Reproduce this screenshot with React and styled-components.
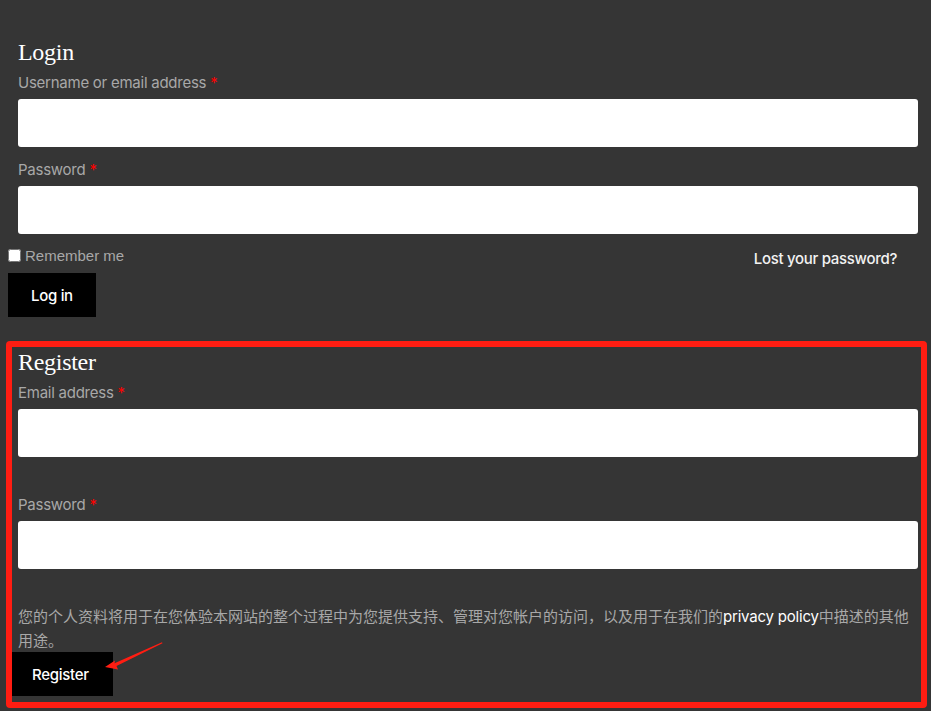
import React from "react"
import styled, { createGlobalStyle } from "styled-components"

const GlobalStyle = createGlobalStyle`
  html, body {
    margin: 0;
    background: #353535;
  }
  body {
    font-family: Inter, "Noto Sans CJK SC", sans-serif;
  }
`

const Page = styled.div`
  min-height: 100vh;
  box-sizing: border-box;
  padding: 38px 13px 0 8px;
  background: #353535;
`

const Title = styled.h2`
  margin: 0 0 0 10px;
  font-family: "Liberation Serif", "DejaVu Serif", serif;
  font-weight: 400;
  font-size: 24px;
  line-height: 29px;
  color: #fff;
  letter-spacing: -0.3px;
`

const Field = styled.div`
  margin: ${(p) => p.$gap}px 0 0 10px;
`

const Label = styled.label`
  display: block;
  font-size: 15px;
  line-height: 22px;
  letter-spacing: -0.25px;
  color: #a8a8a8;
  margin-bottom: 5px;
`

const Required = styled.span`
  color: #ff0000;
`

const Input = styled.input`
  display: block;
  box-sizing: border-box;
  width: 100%;
  height: 48px;
  border: none;
  border-radius: 3px;
  background: #fff;
  outline: none;
`

const Row = styled.div`
  display: flex;
  justify-content: space-between;
  margin-top: 12px;
  height: 22px;
`

const Remember = styled.label`
  display: flex;
  align-items: center;
  align-self: flex-start;
  height: 18px;
  font-family: "Liberation Sans", Arial, sans-serif;
  font-size: 15px;
  color: #a8a8a8;

  input {
    margin: 0 4px 0 0;
    width: 13px;
    height: 13px;
  }
`

const LostLink = styled.a`
  padding-top: 2px;
  margin-right: 21px;
  font-size: 15px;
  line-height: 22px;
  font-weight: 500;
  letter-spacing: -0.3px;
  color: #f2f2f2;
  text-decoration: none;
`

const Button = styled.button`
  display: block;
  height: 44px;
  margin-top: ${(p) => p.$top}px;
  padding: 0 ${(p) => p.$pad}px;
  border: none;
  background: #000;
  color: #fff;
  font-family: Inter, sans-serif;
  font-size: 15px;
  font-weight: 500;
  letter-spacing: -0.3px;
`

const RegisterBlock = styled.section`
  position: relative;
  margin-top: 24px;
  padding-top: 7px;
`

const Notice = styled.p`
  margin: 36px 0 0 10px;
  font-size: 15px;
  line-height: 24px;
  color: #a8a8a8;

  a {
    color: #fff;
    font-weight: 400;
    letter-spacing: -0.2px;
    text-decoration: none;
  }
`

const Highlight = styled.div`
  position: absolute;
  left: -2px;
  top: 0;
  width: 921px;
  height: 367px;
  box-sizing: border-box;
  border: 6px solid #ff1d12;
  border-radius: 4px;
  pointer-events: none;
`

const Arrow = styled.svg`
  position: absolute;
  left: 87px;
  top: 294px;
  pointer-events: none;
`

export default function App() {
  return (
    <>
      <GlobalStyle />
      <Page>
        <Title>Login</Title>
        <Field $gap={5}>
          <Label>
            Username or email address <Required>*</Required>
          </Label>
          <Input type="text" />
        </Field>
        <Field $gap={12}>
          <Label>
            Password <Required>*</Required>
          </Label>
          <Input type="password" />
        </Field>
        <Row>
          <Remember>
            <input type="checkbox" />
            Remember me
          </Remember>
          <LostLink href="#">Lost your password?</LostLink>
        </Row>
        <Button $top={5} $pad={23}>Log in</Button>

        <RegisterBlock>
          <Title>Register</Title>
          <Field $gap={5}>
            <Label>
              Email address <Required>*</Required>
            </Label>
            <Input type="email" />
          </Field>
          <Field $gap={37}>
            <Label>
              Password <Required>*</Required>
            </Label>
            <Input type="password" />
          </Field>
          <Notice>
            您的个人资料将用于在您体验本网站的整个过程中为您提供支持、管理对您帐户的访问，以及用于在我们的
            <a href="#">privacy policy</a>中描述的其他用途。
          </Notice>
          <Button $top={-1} $pad={24}>Register</Button>
          <Highlight />
          <Arrow width="75" height="40" viewBox="0 0 75 40">
            <polygon
              points="10,32 20,25.5 19.5,28.3 67,7.2 67.5,8.2 21.5,31 23,34.5"
              fill="#ff1d12"
            />
          </Arrow>
        </RegisterBlock>
      </Page>
    </>
  )
}
